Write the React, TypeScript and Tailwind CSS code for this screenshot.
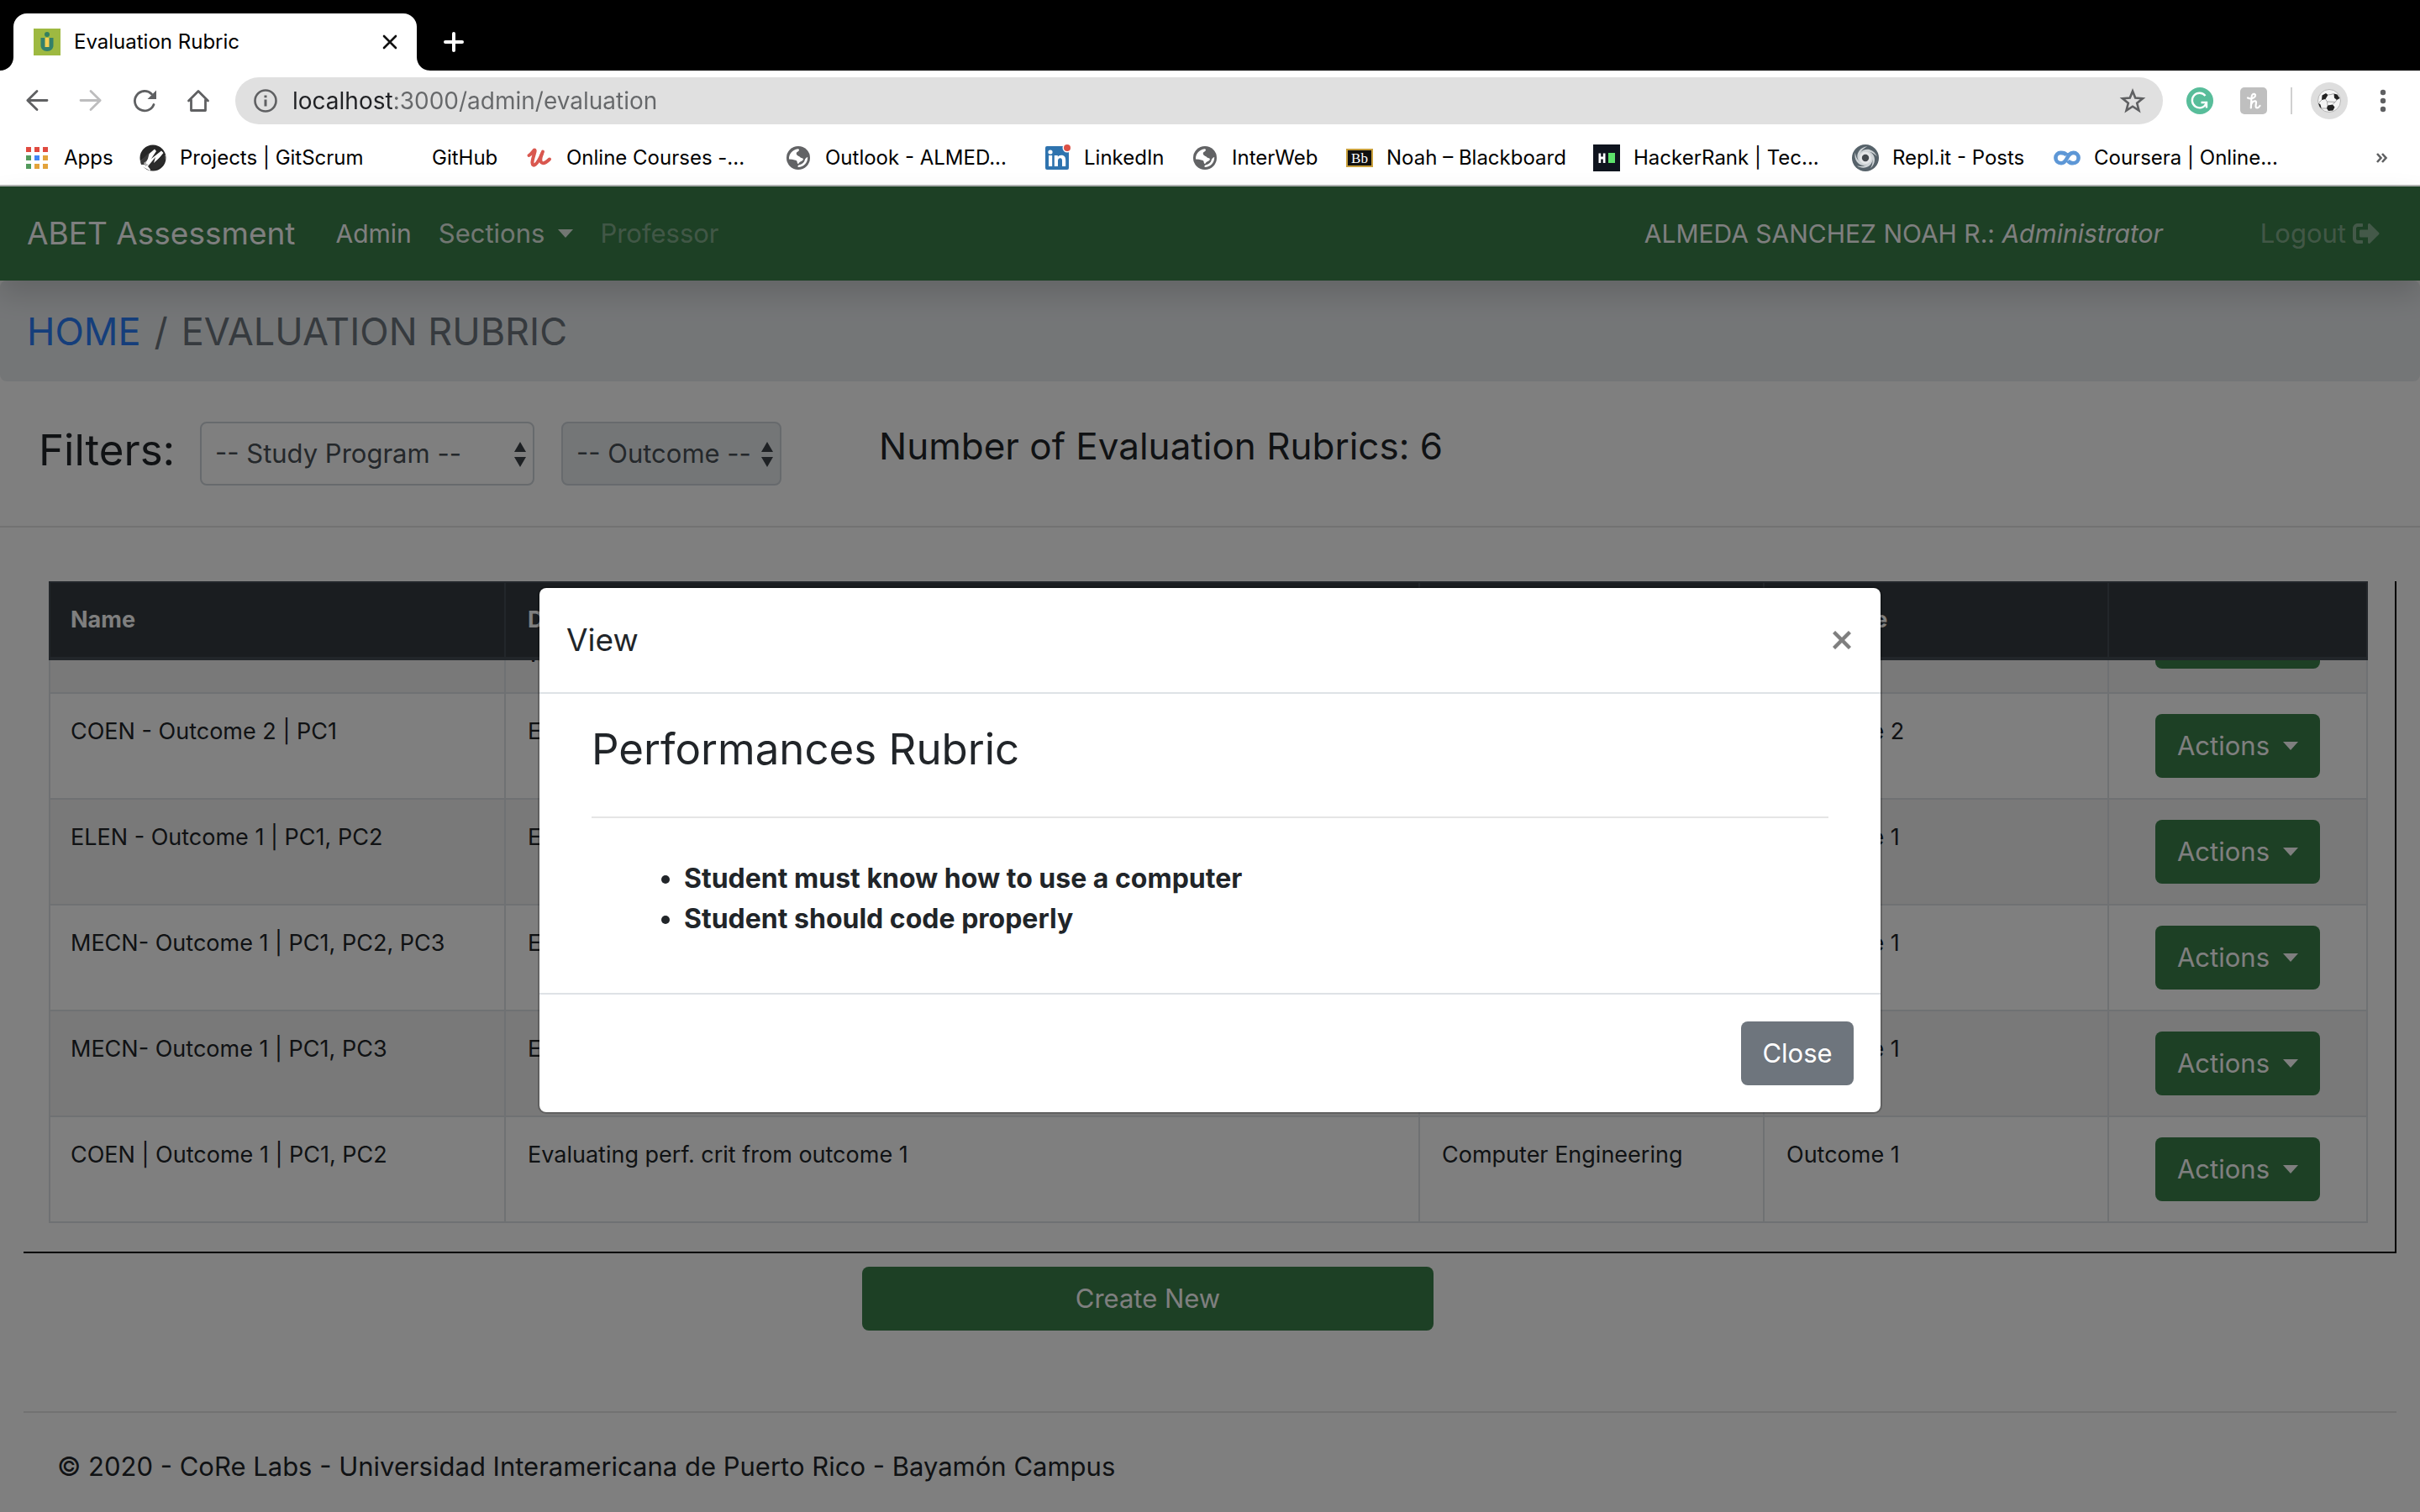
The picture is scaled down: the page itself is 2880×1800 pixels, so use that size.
import React from "react";
import { FaSignOutAlt } from "react-icons/fa";

const Globe = () => (
  <svg viewBox="0 0 28 28" className="h-7 w-7">
    <circle cx="14" cy="14" r="14" fill="#626365" />
    <path
      d="M3 15.5C2.6 9.5 7 4 13.6 3.2C15 3.3 15.3 4.4 14.6 5.6C13.8 6.8 12.2 6.8 11.8 8.2C11.5 9.6 12.4 10.4 13.4 11.2C14.2 11.9 15.2 12 15.8 12.8C16.8 14.4 18.6 14 19.4 14.6C20.6 15.8 19.4 17.4 17.6 18C16 18.4 15.2 19.6 14.4 20.8C13.2 21.4 12.6 20 12.6 18.6C12.6 17 11 16.6 9.6 16.4L6.6 15.8Z"
      fill="#fff"
    />
    <path d="M25.2 13C25.4 19.6 20.4 25 14 25.1C13 24.6 13.4 23 14.6 22.6C16.6 22 19.6 20.6 21 18.4C22.2 16.4 21.4 14.6 25.2 13Z" fill="#fff" />
  </svg>
);

const AppsIcon = () => {
  const colors = ["#e04a3f", "#e04a3f", "#e04a3f", "#539a5c", "#4285f4", "#e3a33b", "#539a5c", "#e3a33b", "#e3a33b"];
  return (
    <svg viewBox="0 0 32 32" className="h-8 w-8">
      {colors.map((c, i) => (
        <rect key={i} x={3 + (i % 3) * 10} y={3 + Math.floor(i / 3) * 10} width="6" height="6" fill={c} />
      ))}
    </svg>
  );
};

const GitScrumIcon = () => (
  <svg viewBox="0 0 32 32" className="h-8 w-8">
    <circle cx="16" cy="16" r="15.5" fill="#262626" />
    <path d="M1 20L18 5.5L20 8L14 17L26 7.5L28.5 10L18 23L31 13L30 18L12 31L3 26Z" fill="#fff" />
    <path d="M1 20L12 9L10 17L6 24L2 24Z" fill="#3a3a3a" />
    <path d="M10 26L19 15L17 22L27 13L31 14L29 22L20 30L14 31Z" fill="#2b2b2b" />
    <path d="M5 22l3-2v3l3 1-4 2z" fill="#b5b5b5" />
  </svg>
);

const UdemyIcon = () => (
  <svg viewBox="0 0 32 32" className="h-8 w-8" fill="none" stroke="#d9574f" strokeLinecap="round" strokeLinejoin="round">
    <path d="M3.5 13C6 12 8 8.5 10 6.5C12.5 6.5 7 17 7.5 22C8 27.5 13 25 19 11" strokeWidth="4" />
    <path d="M20 8.5C18 13 16 19 18.5 21.5C21 23.5 25 20.5 28 17.5" strokeWidth="4" />
  </svg>
);

const LinkedInIcon = () => (
  <svg viewBox="0 0 32 32" className="h-8 w-8">
    <rect x="2" y="2" width="28" height="28" rx="2" fill="#2e73ae" />
    <circle cx="8" cy="9" r="2.6" fill="#fff" />
    <path d="M6 13h4.200v13H6zM12.800 13h4v1.800c.8-1.300 2.200-2.100 4.200-2.100 3.900 0 5.200 2.400 5.200 6.300v7H22v-6.400c0-2-.4-3.300-2.200-3.300-1.900 0-2.800 1.300-2.800 3.300V26h-4.200z" fill="#fff" />
    <circle cx="28" cy="4" r="5.500" fill="#fff" />
    <circle cx="28" cy="4" r="4" fill="#dc5146" />
  </svg>
);

const BlackboardIcon = () => (
  <span className="flex h-[22px] w-8 items-center justify-center border-2 border-[#c9a03c] bg-[#111] font-['Liberation_Serif',serif] text-[17px] leading-none text-white">
    Bb
  </span>
);

const HackerRankIcon = () => (
  <svg viewBox="0 0 32 32" className="h-8 w-8">
    <rect width="32" height="32" fill="#0f141e" />
    <path d="M6.500 10.500h2.700v4h2.600v-4h2.700v11.500h-2.700v-4.500H9.200V22H6.500z" fill="#fff" />
    <rect x="18" y="10" width="8" height="12" fill="#5ee36c" />
  </svg>
);

const ReplIcon = () => (
  <svg viewBox="0 0 32 32" className="h-8 w-8">
    <circle cx="16" cy="16" r="16" fill="#56626a" />
    <g fill="#cfd4d7">
      {[0, 72, 144, 216, 288].map((a) => (
        <path key={a} d="M13 8C20 6 27 11 27 18C27 22 25 26 22 28.5C25 23 25.500 18 22.500 14.500C20 11 16.500 10 13 11Z" transform={`rotate(${a} 16 16)`} />
      ))}
    </g>
    <circle cx="16" cy="16" r="7.200" fill="#e4e6e8" />
    <circle cx="16" cy="16" r="4.200" fill="#43494e" />
  </svg>
);

const CourseraIcon = () => (
  <svg viewBox="0 0 32 32" className="h-8 w-8" fill="none" stroke="#5d97d6" strokeWidth="4.600">
    <path d="M15.500 12.500C14 10.600 11.500 9.900 8.500 9.900C5 9.900 2.400 12.500 2.400 16C2.400 19.500 5 22.200 9 22.200C17 22.200 15 9.900 23.500 9.900C27 9.900 29.600 12.500 29.600 16C29.600 19.500 27 22.200 23 22.200C20.500 22.200 18.500 21.500 17 19.500" />
  </svg>
);

const bookmarks = [
  { label: "Apps", icon: <AppsIcon />, width: "w-[138px]" },
  { label: "Projects | GitScrum", icon: <GitScrumIcon />, width: "w-[300px]" },
  { label: "GitHub", icon: null, width: "w-40" },
  { label: "Online Courses -...", icon: <UdemyIcon />, width: "w-[308px]" },
  { label: "Outlook - ALMED...", icon: <Globe />, width: "w-[308px]" },
  { label: "LinkedIn", icon: <LinkedInIcon />, width: "w-44" },
  { label: "InterWeb", icon: <Globe />, width: "w-[184px]" },
  { label: "Noah – Blackboard", icon: <BlackboardIcon />, width: "w-[294px]" },
  { label: "HackerRank | Tec...", icon: <HackerRankIcon />, width: "w-[308px]" },
  { label: "Repl.it - Posts", icon: <ReplIcon />, width: "w-60" },
  { label: "Coursera | Online...", icon: <CourseraIcon />, width: "w-[308px]" },
];

function TabStrip() {
  return (
    <div className="flex h-[84px] items-end bg-black">
      <svg viewBox="0 0 16 16" className="h-4 w-4">
        <path d="M16 0V16H0C9 16 16 9 16 0Z" fill="#fff" />
      </svg>
      <div className="flex h-[68px] w-[480px] items-center rounded-t-2xl bg-white pr-[22px] pl-6">
        <svg viewBox="0 0 32 32" className="h-8 w-8">
          <rect width="32" height="32" fill="#9eb941" />
          <circle cx="16" cy="7" r="3" fill="#33805f" />
          <path d="M8.500 11h15v9c0 4-3 7-7.500 7s-7.500-3-7.500-7z" fill="#33806a" />
          <rect x="13.500" y="11" width="5" height="11" fill="#f3cf54" />
        </svg>
        <span className="ml-4 flex-1 text-[24px] leading-8 text-black">Evaluation Rubric</span>
        <button aria-label="Close tab" className="flex h-5 w-5 items-center justify-center">
          <svg viewBox="0 0 20 20" className="h-5 w-5" stroke="#111" strokeWidth="2.600" strokeLinecap="round">
            <path d="M3 3L17 17M17 3L3 17" />
          </svg>
        </button>
      </div>
      <svg viewBox="0 0 16 16" className="h-4 w-4">
        <path d="M0 0V16H16C7 16 0 9 0 0Z" fill="#fff" />
      </svg>
      <button aria-label="New tab" className="mb-[22px] ml-4 h-6 w-6">
        <svg viewBox="0 0 24 24" className="h-6 w-6" stroke="#fff" strokeWidth="4" strokeLinecap="round">
          <path d="M12 2V22M2 12H22" />
        </svg>
      </button>
    </div>
  );
}

function Toolbar() {
  return (
    <div className="flex h-[72px] items-center bg-white pl-7 text-[#5f6062]">
      <div className="flex gap-8">
        <button aria-label="Back">
          <svg viewBox="0 0 32 32" className="h-8 w-8" fill="none" stroke="currentColor" strokeWidth="2.800" strokeLinecap="round" strokeLinejoin="round">
            <path d="M28 15.500H5M16 4.500L4.800 15.500L16 26.500" />
          </svg>
        </button>
        <button aria-label="Forward" className="text-[#bdbdbe]">
          <svg viewBox="0 0 32 32" className="h-8 w-8" fill="none" stroke="currentColor" strokeWidth="2.800" strokeLinecap="round" strokeLinejoin="round">
            <path d="M4 15.500H27M16 4.500L27.200 15.500L16 26.500" />
          </svg>
        </button>
        <button aria-label="Reload">
          <svg viewBox="0 0 32 32" className="h-8 w-8" fill="none" stroke="currentColor" strokeWidth="2.800" strokeLinecap="round">
            <path d="M27 20.500A11.700 11.700 0 1 1 24.500 8" />
            <path d="M30 3.500V14H19.500Z" fill="currentColor" stroke="none" />
          </svg>
        </button>
        <button aria-label="Home">
          <svg viewBox="0 0 32 32" className="h-8 w-8" fill="none" stroke="currentColor" strokeWidth="2.800" strokeLinejoin="round" strokeLinecap="round">
            <path d="M4.500 16L16 4.500L27.500 16M7.500 15V27.500H24.500V15" />
          </svg>
        </button>
      </div>
      <div className="ml-7 flex h-14 flex-1 items-center rounded-full bg-[#e0e0e0] pr-5 pl-[22px]">
        <svg viewBox="0 0 28 28" className="h-7 w-7" fill="none" stroke="currentColor" strokeWidth="2.600">
          <circle cx="14" cy="14" r="12.500" />
          <path d="M14 12.500V20.500M14 7.500V10.200" strokeWidth="3" />
        </svg>
        <input
          aria-label="Address"
          defaultValue="localhost:3000/admin/evaluation"
          className="ml-[18px] h-11 flex-1 bg-[linear-gradient(90deg,#202124_120px,#66686a_120px)] bg-clip-text text-[28px] leading-10 text-transparent caret-black outline-none"
        />
        <button aria-label="Bookmark this page">
          <svg viewBox="0 0 32 32" className="h-8 w-8" fill="none" stroke="currentColor" strokeWidth="2.600">
            <path d="M16 4.500L19.200 12.600L28 13.200L21.200 18.800L23.500 27.500L16 22.700L8.500 27.500L10.800 18.800L4 13.200L12.800 12.600Z" />
          </svg>
        </button>
      </div>
      <div className="flex items-center pr-7 pl-7">
        <button aria-label="Grammarly">
          <svg viewBox="0 0 32 32" className="h-8 w-8">
            <circle cx="16" cy="16" r="16" fill="#58bd9a" />
            <path d="M22.500 10A8.800 8.800 0 1 0 23.500 19.500M17.500 18H24V24.500" fill="none" stroke="#fff" strokeWidth="2.400" />
          </svg>
        </button>
        <button aria-label="Honey" className="ml-8">
          <svg viewBox="0 0 32 32" className="h-8 w-8">
            <rect width="32" height="32" rx="5" fill="#bfbfbf" />
            <path d="M9 12.500C13 15 18.500 12 18 9C17 6.500 13.500 8 13.500 12L12.800 24.500M13.200 20C14.500 16.500 18.500 15 19 17.500C19 20 17.500 24.500 20 24.500C21.500 24.500 22.500 23.500 23.500 22" fill="none" stroke="#fff" strokeWidth="2.200" strokeLinecap="round" />
          </svg>
        </button>
        <span className="ml-7 h-8 w-0.5 bg-[#d0d0d0]" />
        <button aria-label="Profile" className="ml-[22px] flex h-11 w-11 items-center justify-center rounded-full bg-[#dedede]">
          <svg viewBox="0 0 28 28" className="h-7 w-7">
            <circle cx="14" cy="14" r="13.500" fill="#f4f4f4" stroke="#b5b5b5" />
            <path d="M12 19.500L18 18.500L20.500 21.500L18.500 25.500L13 26L11 23ZM5.500 7.500L10 5L12.500 7L9.500 12L5 13ZM19.500 5.500L23.500 6.500L26.500 11L23 13L20 10.500ZM1 16.500L3.500 18.500L4.800 23.500L2.500 21Z" fill="#222" />
            <path d="M9.500 12L11.500 15L12 19.500M12.500 7L16 6.500L19.500 5.500M18 18.500L21 15.500L23 13M5 13L2 16M11 23L4.800 23M11.500 15L21 15.500" stroke="#a5a5a5" fill="none" />
          </svg>
        </button>
        <button aria-label="Menu" className="ml-[26px]">
          <svg viewBox="0 0 32 32" className="h-8 w-8" fill="currentColor">
            <circle cx="16" cy="6" r="3.200" />
            <circle cx="16" cy="16" r="3.200" />
            <circle cx="16" cy="26" r="3.200" />
          </svg>
        </button>
      </div>
    </div>
  );
}

function BookmarksBar() {
  return (
    <nav aria-label="Bookmarks" className="flex h-[66px] items-center border-b-2 border-[#b1b3b2] bg-white pr-[38px] pl-7 text-[24px] leading-8 text-black">
      {bookmarks.map((b) => (
        <a key={b.label} href="#" className={`flex shrink-0 items-center gap-4 whitespace-nowrap ${b.width}`}>
          <span className="flex h-8 w-8 shrink-0 items-center justify-center">{b.icon}</span>
          {b.label}
        </a>
      ))}
      <button aria-label="More bookmarks" className="ml-auto text-[#5f6062]">
        <svg viewBox="0 0 16 16" className="h-4 w-4" fill="none" stroke="currentColor" strokeWidth="2.600">
          <path d="M3 3L7.500 8L3 13M9 3L13.500 8L9 13" />
        </svg>
      </button>
    </nav>
  );
}

const Caret = () => (
  <svg viewBox="0 0 18 10" className="h-2.5 w-[18px]" fill="currentColor">
    <path d="M0 0H18L9 10Z" />
  </svg>
);

function Navbar() {
  return (
    <nav className="relative z-10 flex h-28 items-center bg-[#3a804a] pr-12 pl-8 text-[31px] leading-[48px] text-white shadow-[0_16px_32px_rgba(0,0,0,0.15)]">
      <a href="#" className="text-[37px]">ABET Assessment</a>
      <a href="#" className="ml-12 text-[30px]">Admin</a>
      <button className="ml-8 flex items-center gap-4 text-[#e4eee6]">
        Sections <Caret />
      </button>
      <a href="#" className="ml-8 text-white/40">Professor</a>
      <span className="ml-auto text-[30px]">
        ALMEDA SANCHEZ NOAH R.: <em>Administrator</em>
      </span>
      <a href="#" className="ml-[116px] flex items-center gap-2 text-white/40">
        Logout <FaSignOutAlt className="h-8 w-8" />
      </a>
    </nav>
  );
}

const SelectArrows = () => (
  <svg viewBox="0 0 14 30" className="pointer-events-none absolute top-6 right-2.5 h-[30px] w-3.5" fill="#3d4349">
    <path d="M7 0L14 12H0ZM7 30L0 18H14Z" />
  </svg>
);

function Filters() {
  return (
    <section className="flex h-[174px] items-start border-b-2 border-black/10 pt-12 pl-[46px] text-[#212529]">
      <h2 className="w-48 text-[51px] leading-[68px]">Filters:</h2>
      <div className="relative w-[398px]">
        <label htmlFor="program" className="sr-only">Study Program</label>
        <select id="program" className="h-[76px] w-full appearance-none rounded-lg border-2 border-[#ced4da] bg-white pl-4 text-[31px] leading-[48px] text-[#495057]">
          <option>-- Study Program --</option>
        </select>
        <SelectArrows />
      </div>
      <div className="relative ml-8 w-[262px]">
        <label htmlFor="outcome" className="sr-only">Outcome</label>
        <select id="outcome" disabled className="h-[76px] w-full appearance-none rounded-lg border-2 border-[#ced4da] bg-[#e9ecef] pl-4 text-[31px] leading-[48px] text-[#495057] opacity-100">
          <option>-- Outcome --</option>
        </select>
        <SelectArrows />
      </div>
      <h3 className="ml-[116px] text-[44px] leading-[58px]">Number of Evaluation Rubrics: 6</h3>
    </section>
  );
}

const ActionsButton = () => (
  <button className="flex h-[76px] w-[196px] items-center justify-center gap-4 rounded-lg bg-[#3a804a] text-[31px] text-white">
    Actions <Caret />
  </button>
);

const rows = [
  ["COEN - Outcome 2 | PC1", "Evaluating perf. crit from outcome 2", "Computer Engineering", "Outcome 2"],
  ["ELEN - Outcome 1 | PC1, PC2", "Evaluating perf. crit from outcome 1", "Electrical Engineering", "Outcome 1"],
  ["MECN- Outcome 1 | PC1, PC2, PC3", "Evaluating perf. crit from outcome 1", "Mechanical Engineering", "Outcome 1"],
  ["MECN- Outcome 1 | PC1, PC3", "Evaluating perf. crit from outcome 1", "Mechanical Engineering", "Outcome 1"],
  ["COEN | Outcome 1 | PC1, PC2", "Evaluating perf. crit from outcome 1", "Computer Engineering", "Outcome 1"],
];

const cell = "border-r-2 border-b-2 border-[#dee2e6]";

function RubricTable() {
  return (
    <div className="mx-7 mt-16 border-r-2 border-b-2 border-black pr-8 pb-[34px] pl-[30px]">
      <table className="w-full table-fixed border-separate border-spacing-0 text-left text-[27px] leading-[42px] text-[#212529]">
        <colgroup>
          <col className="w-[544px]" />
          <col />
          <col className="w-[410px]" />
          <col className="w-[410px]" />
          <col className="w-[308px]" />
        </colgroup>
        <thead>
          <tr className="bg-[#343a40] text-white">
            {["Name", "Description", "Department", "Outcome", ""].map((h) => (
              <th key={h} className="h-[94px] border-t-2 border-r-2 border-b-4 border-[#454d55] px-[26px] font-bold first:border-l-2 first:px-6">
                {h}
              </th>
            ))}
          </tr>
        </thead>
        <tbody>
          <tr className="bg-[#f2f2f2]">
            <td className={`${cell} border-l-2`} />
            <td className={cell}>
              <div className="flex h-[38px] items-end overflow-hidden px-[26px] pb-6">w</div>
            </td>
            <td className={cell} />
            <td className={cell} />
            <td className={cell}>
              <div className="flex h-[38px] items-end justify-center overflow-hidden pb-7">
                <ActionsButton />
              </div>
            </td>
          </tr>
          {rows.map((r, i) => (
            <tr key={i} className="even:bg-white odd:bg-[#f2f2f2]">
              {r.map((c, j) => (
                <td key={j} className={`${cell} px-[26px] py-6 align-top first:border-l-2 first:px-6`}>
                  {c}
                </td>
              ))}
              <td className={`${cell} py-6`}>
                <div className="flex justify-center">
                  <ActionsButton />
                </div>
              </td>
            </tr>
          ))}
        </tbody>
      </table>
    </div>
  );
}

function ViewDialog() {
  return (
    <div className="absolute inset-0 z-20 flex items-start justify-center bg-black/50 pt-[476px]">
      <div role="dialog" aria-modal="true" aria-labelledby="dialog-title" className="w-full max-w-[1600px] rounded-[10px] border-2 border-black/20 bg-white bg-clip-padding text-[#212529]">
        <header className="flex h-[126px] items-center justify-between border-b-2 border-[#dee2e6] pr-[30px] pl-8">
          <h4 id="dialog-title" className="text-[37px] leading-[60px]">View</h4>
          <button aria-label="Dismiss" className="flex h-8 w-8 items-center justify-center">
            <svg viewBox="0 0 22 22" className="h-[22px] w-[22px]" stroke="#7f7f7f" strokeWidth="4.400">
              <path d="M1.500 1.500L20.500 20.500M20.500 1.500L1.500 20.500" />
            </svg>
          </button>
        </header>
        <div className="px-[62px] pt-8 pb-16">
          <h3 className="text-[51px] leading-[68px]">Performances Rubric</h3>
          <hr className="mt-[46px] border-t-2 border-black/10" />
          <ul className="mt-12 list-disc pl-[110px] text-[32px] leading-[48px] font-bold">
            <li>Student must know how to use a computer</li>
            <li>Student should code properly</li>
          </ul>
        </div>
        <footer className="flex justify-end border-t-2 border-[#dee2e6] p-8">
          <button className="h-[76px] w-[134px] rounded-lg bg-[#6e757d] text-[31px] text-white">Close</button>
        </footer>
      </div>
    </div>
  );
}

export default function App() {
  return (
    <div className="flex min-h-screen flex-col bg-white font-['Inter',sans-serif]">
      <TabStrip />
      <Toolbar />
      <BookmarksBar />
      <main className="relative flex-1">
        <Navbar />
        <div className="flex h-[120px] items-start gap-4 rounded-lg bg-[#e9ecef] px-8 pt-8 text-[45px] leading-[58px] text-[#6c757d]">
          <a href="#" className="text-[#2a7cf6]">HOME</a>
          <span>/</span>
          <span>EVALUATION RUBRIC</span>
        </div>
        <Filters />
        <RubricTable />
        <button className="mt-4 ml-[1026px] block h-[76px] w-[680px] rounded-lg bg-[#3a804a] text-[31px] text-white">
          Create New
        </button>
        <footer className="mx-7 mt-24 border-t-2 border-black/10 px-10 pt-10 pb-7 text-[31px] leading-[48px] text-[#212529]">
          © 2020 - CoRe Labs - Universidad Interamericana de Puerto Rico - Bayamón Campus
        </footer>
        <ViewDialog />
      </main>
    </div>
  );
}
